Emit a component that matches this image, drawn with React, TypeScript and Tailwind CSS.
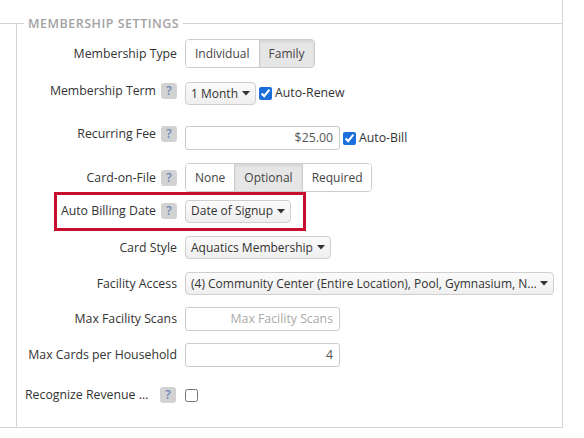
import React from "react";

const labelBase = "flex w-[152px] shrink-0 items-center gap-[5px] whitespace-nowrap text-[12.3px] leading-[18px] text-[#333]";
const labelCls = labelBase + " justify-end";

function Help() {
  return (
    <span className="flex h-[16px] w-[16px] shrink-0 items-center justify-center rounded-[3px] bg-[#d2d2d2] text-[12px] font-semibold leading-none text-[#6c88ba]">
      ?
    </span>
  );
}

function Caret() {
  return (
    <svg width="8" height="5" viewBox="0 0 8 5" className="ml-[4px] shrink-0">
      <path d="M0 0h8L4 4.5z" fill="#333" />
    </svg>
  );
}

function Select({ text, width }: { text: string; width?: string }) {
  return (
    <div
      className={`flex h-[23px] ${width ?? ""} items-center justify-between whitespace-nowrap rounded-[4px] border border-[#cfcfcf] bg-gradient-to-b from-[#fbfbfb] to-[#efefef] pl-[5px] pr-[5px] text-[12px] text-[#333]`}
    >
      <span className="min-w-0 overflow-hidden">{text}</span>
      <Caret />
    </div>
  );
}

function Group({ items, active }: { items: string[]; active: string }) {
  return (
    <div className="flex h-[29px] overflow-hidden rounded-[4px] border border-[#cccccc] text-[12px] text-[#444]">
      {items.map((it, i) => (
        <div
          key={it}
          className={
            "flex items-center px-[9px] " +
            (i > 0 ? "border-l border-[#cccccc] " : "") +
            (it === active ? "bg-[#e6e6e6] shadow-[inset_0_2px_3px_rgba(0,0,0,0.08)]" : "bg-white")
          }
        >
          {it}
        </div>
      ))}
    </div>
  );
}

function Check({ checked, label }: { checked?: boolean; label?: string }) {
  return (
    <label className="ml-[3px] flex items-center gap-[3px] whitespace-nowrap text-[12.3px] text-[#333]">
      <input type="checkbox" defaultChecked={checked} className="m-0 h-[13px] w-[13px] accent-[#1a6fdc]" />
      {label && <span>{label}</span>}
    </label>
  );
}

function TextBox({ value, placeholder }: { value?: string; placeholder?: string }) {
  return (
    <div className="flex h-[24px] w-[155px] items-center justify-end whitespace-nowrap rounded-[3px] border border-[#cccccc] bg-white px-[6px] text-[12.3px]">
      {value ? <span className="text-[#555]">{value}</span> : <span className="text-[#aaa]">{placeholder}</span>}
    </div>
  );
}

export default function App() {
  return (
    <div className="h-[438px] w-[584px] bg-white font-['Open_Sans',sans-serif]">
      <div className="flex h-[428px] w-[563px] flex-col border-b border-r border-[#d4d4d4]">
        {/* legend line */}
        <div className="flex h-[24px] shrink-0 items-end">
          <div className="w-[24px] border-b border-[#d4d4d4]" />
          <span className="translate-y-[8px] px-[4px] text-[12.5px] font-semibold leading-[16px] tracking-[0.5px] text-[#a3a3a3]">
            MEMBERSHIP SETTINGS
          </span>
          <div className="flex-1 border-b border-[#d4d4d4]" />
        </div>

        <div className="ml-[16px] flex flex-1 flex-col border-l border-[#d4d4d4] pl-[8px]">
          <div className="mt-[15px] flex h-[29px] items-center gap-[8px]">
            <div className={labelCls}>Membership Type</div>
            <Group items={["Individual", "Family"]} active="Family" />
          </div>

          <div className="mt-[14px] flex h-[23px] items-center gap-[8px]">
            <div className={labelCls + " mb-[6px]"}>
              Membership Term <Help />
            </div>
            <div className="flex items-center">
              <Select text="1 Month" />
              <Check checked label="Auto-Renew" />
            </div>
          </div>

          <div className="mt-[21px] flex h-[24px] items-center gap-[8px]">
            <div className={labelCls + " mb-[8px]"}>
              Recurring Fee <Help />
            </div>
            <div className="flex items-center">
              <TextBox value="$25.00" />
              <Check checked label="Auto-Bill" />
            </div>
          </div>

          <div className="mt-[13px] flex h-[29px] items-center gap-[8px]">
            <div className={labelCls}>
              Card-on-File <Help />
            </div>
            <Group items={["None", "Optional", "Required"]} active="Optional" />
          </div>

          <div className="relative mt-[8px] flex h-[22px] items-center gap-[8px]">
            <div className={labelCls}>
              Auto Billing Date <Help />
            </div>
            <Select text="Date of Signup" />
            <div className="pointer-events-none absolute left-[29px] top-[-8px] h-[39px] w-[252px] border-[3px] border-[#c8102e]" />
          </div>

          <div className="mt-[14px] flex h-[23px] items-center gap-[8px]">
            <div className={labelCls}>Card Style</div>
            <Select text="Aquatics Membership" />
          </div>

          <div className="mt-[13px] flex h-[23px] items-center gap-[8px]">
            <div className={labelCls}>Facility Access</div>
            <Select
              text="(4) Community Center (Entire Location), Pool, Gymnasium, N..."
              width="w-[369px]"
            />
          </div>

          <div className="mt-[12px] flex h-[24px] items-center gap-[8px]">
            <div className={labelCls}>Max Facility Scans</div>
            <TextBox placeholder="Max Facility Scans" />
          </div>

          <div className="mt-[12px] flex h-[24px] items-center gap-[8px]">
            <div className={labelCls}>Max Cards per Household</div>
            <TextBox value="4" />
          </div>

          <div className="mt-[16px] flex h-[24px] items-center gap-[8px]">
            <div className={labelBase + " justify-between pr-[1px]"}>
              <span>Recognize Revenue ...</span>
              <Help />
            </div>
            <input type="checkbox" className="m-0 h-[13px] w-[13px]" />
          </div>
        </div>
      </div>
    </div>
  );
}
